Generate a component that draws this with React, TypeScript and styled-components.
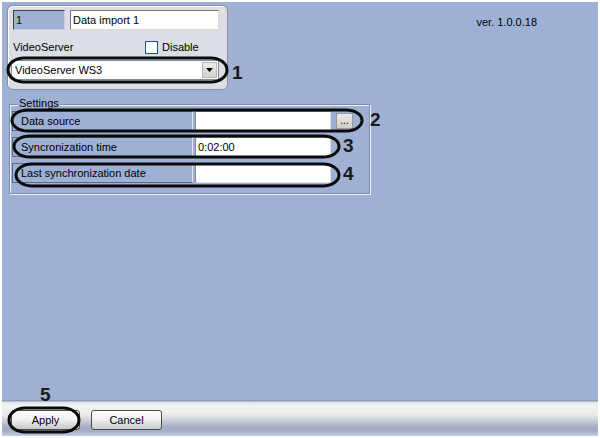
import React from "react";
import styled, { createGlobalStyle } from "styled-components";

const Global = createGlobalStyle`
  html, body {
    margin: 0;
    padding: 0;
    background: #ffffff;
  }
  body {
    font-family: "Liberation Sans", Arial, sans-serif;
    font-size: 11px;
    color: #000;
  }
  * {
    box-sizing: border-box;
  }
`;

const Frame = styled.div`
  position: relative;
  width: 600px;
  height: 438px;
  padding: 2px;
  background: #ffffff;
`;

const Window = styled.div`
  height: 434px;
  display: flex;
  flex-direction: column;
  background: #9eb0d4;
`;

const Workspace = styled.div`
  flex: 1;
  padding-top: 3px;
  display: flex;
  flex-direction: column;
`;

const TopRow = styled.div`
  display: flex;
  align-items: flex-start;
`;

const Card = styled.div`
  margin-left: 5px;
  width: 221px;
  height: 85px;
  border: 1px solid #8c8f99;
  border-radius: 6px;
  background: #dcdee6;
  box-shadow: inset 1px 1px 0 #ffffff;
  padding: 4px 0 0 5px;
  display: flex;
  flex-direction: column;
`;

const FieldRow = styled.div`
  display: flex;
  gap: 5px;
  height: 20px;
`;

const TextField = styled.div<{ $w: number; $disabled?: boolean }>`
  width: ${(p) => p.$w}px;
  height: 20px;
  line-height: 18px;
  padding-left: 2px;
  background: ${(p) => (p.$disabled ? "#9eb0d4" : "#ffffff")};
  border: 1px solid;
  border-color: ${(p) =>
    p.$disabled ? "#404040 #c8d0e0 #c8d0e0 #404040" : "#7a7a7a #d8d8d8 #d8d8d8 #7a7a7a"};
  white-space: nowrap;
  overflow: hidden;
`;

const ServerRow = styled.div`
  display: flex;
  align-items: center;
  height: 16px;
  margin-top: 9px;
`;

const ServerLabel = styled.span`
  width: 132px;
`;

const CheckBox = styled.span`
  width: 13px;
  height: 13px;
  background: #ffffff;
  border: 1px solid #1c5180;
  margin-right: 4px;
`;

const Combo = styled.div`
  margin-top: 5px;
  margin-left: -2px;
  width: 208px;
  height: 20px;
  background: #ffffff;
  border: 1px solid #7f8aa0;
  display: flex;
  align-items: center;
  padding: 0 1px 0 3px;
`;

const ComboText = styled.span`
  flex: 1;
`;

const ComboArrow = styled.span`
  width: 15px;
  height: 16px;
  background: linear-gradient(#ecebe6, #d4d2ca);
  border: 1px solid #b8b6ae;
  display: flex;
  align-items: center;
  justify-content: center;
`;

const Version = styled.span`
  margin-left: auto;
  margin-right: 61px;
  margin-top: 11px;
  line-height: 13px;
`;

const Group = styled.div`
  position: relative;
  margin: 14px 0 0 7px;
  width: 361px;
  height: 90px;
  border: 1px solid #7f8ca6;
  box-shadow: inset 1px 1px 0 #eef1f7, 1px 1px 0 #eef1f7;
  padding: 6px 0 0 2px;
  display: flex;
  flex-direction: column;
  gap: 6px;
`;

const Legend = styled.span`
  position: absolute;
  left: 8px;
  top: -8px;
  line-height: 13px;
  padding: 0 1px;
  background: #9eb0d4;
`;

const SettingRow = styled.div`
  display: flex;
  align-items: flex-start;
  height: 20px;
`;

const SettingLabel = styled.div`
  width: 181px;
  height: 20px;
  line-height: 18px;
  padding-left: 8px;
  border: 1px solid;
  border-color: #5d6880 #dfe5f0 #5d6880 #5d6880;
`;

const SettingInput = styled.div`
  margin-left: 2px;
  width: 136px;
  height: 20px;
  line-height: 18px;
  padding-left: 2px;
  background: #ffffff;
  border: 1px solid;
  border-color: #8a8a8a #e0e0e0 #e0e0e0 #8a8a8a;
`;

const BrowseButton = styled.div`
  margin: 2px 0 0 5px;
  width: 17px;
  height: 16px;
  background: linear-gradient(#ebeae5, #cfcdc4);
  border: 1px solid #9a9890;
  font-size: 10px;
  line-height: 14px;
  text-align: center;
`;

const BottomBar = styled.div`
  height: 36px;
  padding: 10px 0 0 9px;
  display: flex;
  gap: 11px;
  background: linear-gradient(
    to bottom,
    #8c99b2 0px,
    #8c99b2 1px,
    #dde2e8 2px,
    #f1f2f1 5px,
    #eceeed 14px,
    #c9cdd8 21px,
    #a6adc4 27px,
    #a3acc6 31px,
    #c3d3e2 36px
  );
`;

const PushButton = styled.div<{ $w: number }>`
  width: ${(p) => p.$w}px;
  height: 20px;
  border: 1px solid #4a4a4a;
  border-radius: 3px;
  background: linear-gradient(#ffffff, #f2f2f2 45%, #c9c9c9);
  line-height: 18px;
  text-align: center;
`;

const Overlay = styled.svg`
  position: absolute;
  left: 0;
  top: 0;
  pointer-events: none;
`;

const Marker = styled.span<{ $x: number; $y: number }>`
  position: absolute;
  left: ${(p) => p.$x}px;
  top: ${(p) => p.$y}px;
  font-size: 19px;
  font-weight: bold;
  line-height: 19px;
  color: #1a1a1a;
`;

const rings = [
  { x: 8, y: 58, w: 219, h: 24 },
  { x: 12, y: 110, w: 350, h: 21 },
  { x: 14, y: 136, w: 325, h: 21 },
  { x: 16, y: 164, w: 323, h: 22 },
  { x: 9, y: 408, w: 70, h: 24 },
];

const markers = [
  { n: "1", x: 232, y: 63 },
  { n: "2", x: 370, y: 110 },
  { n: "3", x: 343, y: 136 },
  { n: "4", x: 343, y: 164 },
  { n: "5", x: 40, y: 385 },
];

const settings = [
  { label: "Data source", value: "", browse: true },
  { label: "Syncronization time", value: "0:02:00", browse: false },
  { label: "Last synchronization date", value: "", browse: false },
];

export default function App() {
  return (
    <Frame>
      <Global />
      <Window>
        <Workspace>
          <TopRow>
            <Card>
              <FieldRow>
                <TextField $w={52} $disabled>
                  1
                </TextField>
                <TextField $w={149}>Data import 1</TextField>
              </FieldRow>
              <ServerRow>
                <ServerLabel>VideoServer</ServerLabel>
                <CheckBox />
                <span>Disable</span>
              </ServerRow>
              <Combo>
                <ComboText>VideoServer WS3</ComboText>
                <ComboArrow>
                  <svg width="7" height="4" viewBox="0 0 7 4">
                    <path d="M0 0h7L3.5 4z" fill="#000" />
                  </svg>
                </ComboArrow>
              </Combo>
            </Card>
            <Version>ver. 1.0.0.18</Version>
          </TopRow>
          <Group>
            <Legend>Settings</Legend>
            {settings.map((s) => (
              <SettingRow key={s.label}>
                <SettingLabel>{s.label}</SettingLabel>
                <SettingInput>{s.value}</SettingInput>
                {s.browse && <BrowseButton>...</BrowseButton>}
              </SettingRow>
            ))}
          </Group>
        </Workspace>
        <BottomBar>
          <PushButton $w={69}>Apply</PushButton>
          <PushButton $w={71}>Cancel</PushButton>
        </BottomBar>
      </Window>
      <Overlay width="600" height="438" viewBox="0 0 600 438">
        {rings.map((r, i) => (
          <rect
            key={i}
            x={r.x}
            y={r.y}
            width={r.w}
            height={r.h}
            rx={Math.min(16, r.w / 4)}
            ry={r.h / 2}
            fill="none"
            stroke="#0a0a0a"
            strokeWidth="3"
          />
        ))}
      </Overlay>
      {markers.map((m) => (
        <Marker key={m.n} $x={m.x} $y={m.y}>
          {m.n}
        </Marker>
      ))}
    </Frame>
  );
}
